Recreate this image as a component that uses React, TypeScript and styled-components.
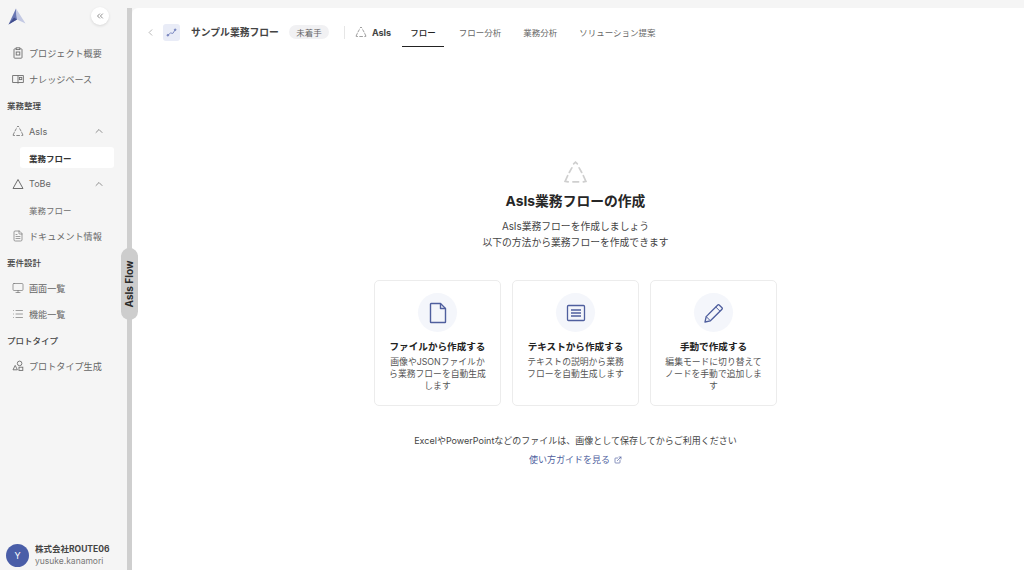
import React from 'react';
import styled, { createGlobalStyle } from 'styled-components';
import {
  ChevronsLeft,
  ChevronLeft,
  ChevronUp,
  FileText,
  Monitor,
  List,
  ExternalLink,
} from 'lucide-react';

const GlobalStyle = createGlobalStyle`
  html, body { margin: 0; padding: 0; height: 570px; overflow: hidden; }
  body { font-family: "Inter", "Noto Sans CJK JP", sans-serif; background: #f5f5f5; color: #1f1f1f; }
  * { box-sizing: border-box; }
`;

const Page = styled.div`
  position: relative;
  display: flex;
  width: 1024px;
  height: 570px;
  overflow: hidden;
`;

const Sidebar = styled.aside`
  width: 127px;
  flex: none;
  display: flex;
  flex-direction: column;
  background: #f5f5f5;
`;

const LogoRow = styled.div`
  height: 40px;
  flex: none;
  display: flex;
  align-items: center;
  justify-content: space-between;
  padding: 0 18px 8px 8px;
`;

const CollapseButton = styled.button`
  width: 18px;
  height: 18px;
  padding: 0;
  border: 0;
  border-radius: 50%;
  background: #fff;
  color: #777;
  display: flex;
  align-items: center;
  justify-content: center;
  box-shadow: 0 1px 3px rgba(0, 0, 0, 0.12);
`;

const Nav = styled.nav`
  display: flex;
  flex-direction: column;
`;

const NavItem = styled.div`
  height: 26.15px;
  display: flex;
  align-items: center;
  gap: 5px;
  padding: 0 22px 0 12px;
  font-size: 9.1px;
  color: #666;
  white-space: nowrap;
  & > span { flex: 1; }
  & > svg { flex: none; color: #6e6e6e; }
`;

const SectionLabel = styled.div`
  height: 26.15px;
  display: flex;
  align-items: center;
  padding-left: 7px;
  font-size: 8.5px;
  font-weight: 500;
  color: #444;
`;

const SubItem = styled.div<{ $active?: boolean }>`
  height: 21px;
  margin: 2.5px 13px 2.5px 20px;
  padding-left: 9px;
  display: flex;
  align-items: center;
  border-radius: 3px;
  font-size: 8.5px;
  font-weight: ${p => (p.$active ? 700 : 400)};
  color: ${p => (p.$active ? '#333' : '#6e6e6e')};
  background: ${p => (p.$active ? '#fff' : 'transparent')};
`;

const Account = styled.div`
  margin-top: auto;
  height: 29px;
  display: flex;
  align-items: center;
  gap: 6px;
  padding-left: 6px;
`;

const Avatar = styled.div`
  width: 23px;
  height: 23px;
  border-radius: 50%;
  background: #4a5ea8;
  color: #fff;
  font-size: 9px;
  display: flex;
  align-items: center;
  justify-content: center;
`;

const AccountText = styled.div`
  display: flex;
  flex-direction: column;
  line-height: 11.5px;
`;

const Company = styled.div`
  font-size: 8.5px;
  font-weight: 700;
  color: #444;
  white-space: nowrap;
`;

const UserName = styled.div`
  font-size: 8.5px;
  color: #777;
`;

const Divider = styled.div`
  width: 5px;
  flex: none;
  background: #cfcfcf;
  margin-top: 8px;
`;

const FlowHandle = styled.div`
  position: absolute;
  left: 121px;
  top: 248px;
  width: 17px;
  height: 72px;
  border-radius: 9px;
  background: #cdcdcd;
  color: #2a2a2a;
  font-size: 10px;
  font-weight: 700;
  display: flex;
  align-items: center;
  justify-content: center;
  & > span { transform: rotate(-90deg); white-space: nowrap; }
`;

const Main = styled.main`
  flex: 1;
  margin-top: 8px;
  display: flex;
  flex-direction: column;
  background: #fff;
  border-top-left-radius: 6px;
  overflow: hidden;
`;

const TopBar = styled.header`
  height: 39px;
  flex: none;
  display: flex;
  align-items: center;
  padding: 9px 0 0 13px;
`;

const FlowBadge = styled.div`
  width: 17px;
  height: 17px;
  margin-left: 7px;
  border-radius: 3px;
  background: #e9ecf7;
  display: flex;
  align-items: center;
  justify-content: center;
`;

const FlowTitle = styled.div`
  margin-left: 11px;
  font-size: 9.8px;
  font-weight: 700;
  color: #444;
  white-space: nowrap;
`;

const StatusPill = styled.div`
  margin-left: 10px;
  height: 14px;
  width: 40px;
  border-radius: 7px;
  background: #f1f1f3;
  color: #666;
  font-size: 8.5px;
  display: flex;
  align-items: center;
  justify-content: center;
`;

const BarRule = styled.div`
  width: 1px;
  height: 13px;
  margin: 0 10px 0 15px;
  background: #e6e6e6;
`;

const PhaseLabel = styled.div`
  display: flex;
  align-items: center;
  gap: 5px;
  font-size: 9px;
  font-weight: 700;
  color: #444;
`;

const Tabs = styled.div`
  display: flex;
  align-self: stretch;
  margin-left: 11px;
`;

const Tab = styled.div<{ $active?: boolean }>`
  height: 30px;
  padding: 0 ${p => (p.$active ? '8px' : '0')};
  margin-right: ${p => (p.$active ? '15px' : '22px')};
  display: flex;
  align-items: center;
  font-size: 8.5px;
  font-weight: ${p => (p.$active ? 500 : 400)};
  color: ${p => (p.$active ? '#222' : '#666')};
  border-bottom: 1px solid ${p => (p.$active ? '#222' : 'transparent')};
`;

const Content = styled.section`
  flex: 1;
  display: flex;
  flex-direction: column;
  align-items: center;
  padding: 113px 5px 0 0;
`;

const Heading = styled.h1`
  margin: 6px 0 0;
  font-size: 13.8px;
  line-height: 20px;
  font-weight: 700;
  color: #262626;
`;

const Lead = styled.p`
  margin: 8px 0 0;
  font-size: 9.8px;
  line-height: 16px;
  color: #444;
  text-align: center;
`;

const Cards = styled.div`
  margin-top: 29px;
  display: flex;
  gap: 11px;
`;

const Card = styled.div`
  width: 127px;
  height: 126px;
  padding: 12px 9px 0;
  border: 1px solid #ececec;
  border-radius: 5px;
  display: flex;
  flex-direction: column;
  align-items: center;
`;

const IconDisc = styled.div`
  width: 39px;
  height: 39px;
  border-radius: 50%;
  background: #f4f6fb;
  color: #4f5f9e;
  display: flex;
  align-items: center;
  justify-content: center;
`;

const CardTitle = styled.div`
  margin-top: 8px;
  font-size: 9.6px;
  line-height: 14px;
  font-weight: 700;
  color: #222;
  white-space: nowrap;
`;

const CardText = styled.div`
  margin-top: 2px;
  width: 99px;
  font-size: 8.8px;
  line-height: 12px;
  color: #555;
  text-align: center;
`;

const Note = styled.p`
  margin: 28px 0 0;
  font-size: 9px;
  line-height: 14px;
  color: #444;
`;

const GuideLink = styled.a`
  margin-top: 5px;
  display: flex;
  align-items: center;
  gap: 4px;
  font-size: 9px;
  line-height: 13px;
  color: #4f5f9e;
`;

const Logo = () => (
  <svg width="18" height="17" viewBox="0 0 18 17">
    <path d="M8 0.5 L0.5 16.5 L9 11.5 Z" fill="#6a78b4" />
    <path d="M8 0.5 L17.5 15.5 L9 11.5 Z" fill="#c3c9e3" />
    <path d="M0.5 16.5 L9 11.5 L6 9.5 Z" fill="#414e8d" />
  </svg>
);

const DashedTriangle = ({ size, color }: { size: number; color: string }) => (
  <svg width={size} height={size} viewBox="0 0 24 24" fill="none" stroke={color} strokeWidth="1.6" strokeLinecap="round">
    <path d="M10.2 3.8 L12 2 L13.8 3.8 M15.5 7.5 L18 12 M19.5 15 L22 20.5 L19.5 21 M15 21 H9.5 M5 21 L2 20.5 L4.5 15 M6 12 L8.5 7.5" />
  </svg>
);

const SolidTriangle = () => (
  <svg width="12" height="12" viewBox="0 0 24 24" fill="none" stroke="#6e6e6e" strokeWidth="2" strokeLinejoin="round">
    <path d="M12 3 L22 21 H2 Z" />
  </svg>
);

const FlowGlyph = () => (
  <svg width="11" height="11" viewBox="0 0 12 12" fill="none" stroke="#7583bd" strokeWidth="1">
    <path d="M2 9 L5 6.5 L7.5 7 L10 3" />
    <circle cx="2" cy="9" r="0.9" fill="#7583bd" />
    <circle cx="10" cy="3" r="0.9" fill="#7583bd" />
  </svg>
);

const OverviewIcon = () => (
  <svg width="12" height="12" viewBox="0 0 12 12" fill="none" stroke="#6e6e6e" strokeWidth="0.9">
    <rect x="2" y="1.8" width="8" height="9.4" rx="0.8" />
    <rect x="4.2" y="0.8" width="3.6" height="1.8" fill="#f5f5f5" />
    <rect x="4.2" y="5" width="3.6" height="3" />
  </svg>
);

const KnowledgeIcon = () => (
  <svg width="12" height="12" viewBox="0 0 12 12" fill="none" stroke="#6e6e6e" strokeWidth="0.9">
    <path d="M0.6 2.5 H11.4 V9.5 H0.6 Z M6 2.5 V10.6" />
    <rect x="7.4" y="4.4" width="2.4" height="2.2" />
  </svg>
);

const PrototypeIcon = () => (
  <svg width="12" height="12" viewBox="0 0 12 12" fill="none" stroke="#6e6e6e" strokeWidth="0.9">
    <circle cx="7.6" cy="3.4" r="2.3" />
    <path d="M3.2 5.4 L5.4 9.8 H1 Z" />
    <rect x="7" y="7.2" width="3.8" height="3.2" />
  </svg>
);

const FileGlyph = () => (
  <svg width="20" height="22" viewBox="0 0 20 22" fill="none" stroke="currentColor" strokeWidth="1.4" strokeLinejoin="round">
    <path d="M3 1.5 H12.5 L17.5 6.5 V20 Q17.5 20.5 17 20.5 H3 Q2.5 20.5 2.5 20 V2 Q2.5 1.5 3 1.5 Z" />
    <path d="M12.5 1.5 V6.5 H17.5" />
  </svg>
);

const TextGlyph = () => (
  <svg width="20" height="20" viewBox="0 0 20 20" fill="none" stroke="currentColor" strokeWidth="1.3">
    <rect x="1.5" y="2.5" width="17" height="15" rx="1" />
    <path d="M5 7 H15 M5 10 H15 M5 13 H15" />
  </svg>
);

const PencilGlyph = () => (
  <svg width="22" height="22" viewBox="0 0 22 22" fill="none" stroke="currentColor" strokeWidth="1.3" strokeLinejoin="round">
    <path d="M2 20 L3.2 14.6 L14.8 3 Q15.5 2.3 16.2 3 L19 5.8 Q19.7 6.5 19 7.2 L7.4 18.8 Z" />
    <path d="M12.8 5 L17 9.2 M3.2 14.6 L7.4 18.8 M5.2 12.6 L15.4 2.6 M9.4 16.8 L19.4 6.6" strokeWidth="1" />
  </svg>
);

const cards = [
  {
    title: 'ファイルから作成する',
    text: '画像やJSONファイルから業務フローを自動生成します',
    icon: <FileGlyph />,
  },
  {
    title: 'テキストから作成する',
    text: 'テキストの説明から業務フローを自動生成します',
    icon: <TextGlyph />,
  },
  {
    title: '手動で作成する',
    text: '編集モードに切り替えてノードを手動で追加します',
    icon: <PencilGlyph />,
  },
];

export default function App() {
  return (
    <Page>
      <GlobalStyle />
      <Sidebar>
        <LogoRow>
          <Logo />
          <CollapseButton>
            <ChevronsLeft size={10} />
          </CollapseButton>
        </LogoRow>
        <Nav>
          <NavItem>
            <OverviewIcon />
            <span>プロジェクト概要</span>
          </NavItem>
          <NavItem>
            <KnowledgeIcon />
            <span>ナレッジベース</span>
          </NavItem>
          <SectionLabel>業務整理</SectionLabel>
          <NavItem>
            <DashedTriangle size={12} color="#6e6e6e" />
            <span>AsIs</span>
            <ChevronUp size={12} strokeWidth={1.5} />
          </NavItem>
          <SubItem $active>業務フロー</SubItem>
          <NavItem>
            <SolidTriangle />
            <span>ToBe</span>
            <ChevronUp size={12} strokeWidth={1.5} />
          </NavItem>
          <SubItem>業務フロー</SubItem>
          <NavItem>
            <FileText size={12} strokeWidth={1.3} />
            <span>ドキュメント情報</span>
          </NavItem>
          <SectionLabel>要件設計</SectionLabel>
          <NavItem>
            <Monitor size={12} strokeWidth={1.3} />
            <span>画面一覧</span>
          </NavItem>
          <NavItem>
            <List size={12} strokeWidth={1.3} />
            <span>機能一覧</span>
          </NavItem>
          <SectionLabel>プロトタイプ</SectionLabel>
          <NavItem>
            <PrototypeIcon />
            <span>プロトタイプ生成</span>
          </NavItem>
        </Nav>
        <Account>
          <Avatar>Y</Avatar>
          <AccountText>
            <Company>株式会社ROUTE06</Company>
            <UserName>yusuke.kanamori</UserName>
          </AccountText>
        </Account>
      </Sidebar>
      <Divider />
      <FlowHandle>
        <span>AsIs Flow</span>
      </FlowHandle>
      <Main>
        <TopBar>
          <ChevronLeft size={11} color="#999" strokeWidth={1.5} />
          <FlowBadge>
            <FlowGlyph />
          </FlowBadge>
          <FlowTitle>サンプル業務フロー</FlowTitle>
          <StatusPill>未着手</StatusPill>
          <BarRule />
          <PhaseLabel>
            <DashedTriangle size={12} color="#888" />
            AsIs
          </PhaseLabel>
          <Tabs>
            <Tab $active>フロー</Tab>
            <Tab>フロー分析</Tab>
            <Tab>業務分析</Tab>
            <Tab>ソリューション提案</Tab>
          </Tabs>
        </TopBar>
        <Content>
          <DashedTriangle size={25} color="#cfcfcf" />
          <Heading>AsIs業務フローの作成</Heading>
          <Lead>
            AsIs業務フローを作成しましょう
            <br />
            以下の方法から業務フローを作成できます
          </Lead>
          <Cards>
            {cards.map(card => (
              <Card key={card.title}>
                <IconDisc>{card.icon}</IconDisc>
                <CardTitle>{card.title}</CardTitle>
                <CardText>{card.text}</CardText>
              </Card>
            ))}
          </Cards>
          <Note>ExcelやPowerPointなどのファイルは、画像として保存してからご利用ください</Note>
          <GuideLink>
            使い方ガイドを見る
            <ExternalLink size={8} />
          </GuideLink>
        </Content>
      </Main>
    </Page>
  );
}
